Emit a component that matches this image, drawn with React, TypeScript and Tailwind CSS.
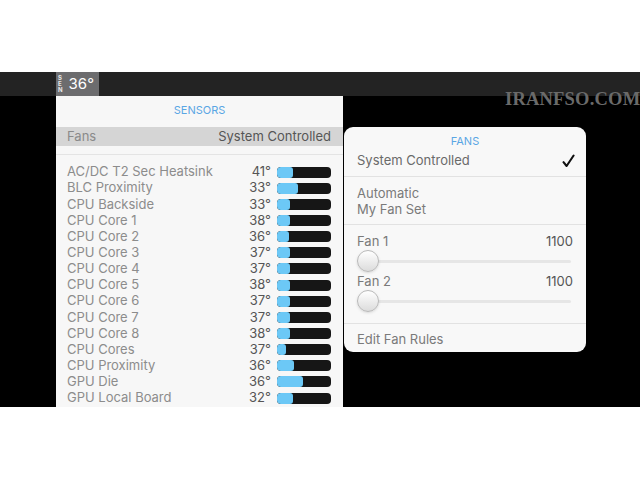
import React from 'react';

const sensors: { name: string; temp: number; fill: number }[] = [
  { name: 'AC/DC T2 Sec Heatsink', temp: 41, fill: 16 },
  { name: 'BLC Proximity', temp: 33, fill: 21 },
  { name: 'CPU Backside', temp: 33, fill: 13 },
  { name: 'CPU Core 1', temp: 38, fill: 13 },
  { name: 'CPU Core 2', temp: 36, fill: 12 },
  { name: 'CPU Core 3', temp: 37, fill: 13 },
  { name: 'CPU Core 4', temp: 37, fill: 13 },
  { name: 'CPU Core 5', temp: 38, fill: 13 },
  { name: 'CPU Core 6', temp: 37, fill: 13 },
  { name: 'CPU Core 7', temp: 37, fill: 13 },
  { name: 'CPU Core 8', temp: 38, fill: 13 },
  { name: 'CPU Cores', temp: 37, fill: 9 },
  { name: 'CPU Proximity', temp: 36, fill: 17 },
  { name: 'GPU Die', temp: 36, fill: 26 },
  { name: 'GPU Local Board', temp: 32, fill: 16 },
];

const Slider: React.FC = () => (
  <div className="relative h-[22px] flex items-center">
    <div className="absolute left-[20px] right-[2px] h-[3px] rounded-full bg-[#e6e6e6]" />
    <div className="relative w-[22px] h-[22px] rounded-full border border-[#b9b9b9] bg-gradient-to-b from-white to-[#dcdcdc] shadow-sm" />
  </div>
);

const FansPopup: React.FC = () => (
  <div className="absolute left-[344px] top-[31px] w-[242px] h-[225px] rounded-[9px] bg-[#f8f8f8] text-[13px] text-[#7a7a7a] overflow-hidden">
    <div className="pt-[7px] text-center text-[11px] leading-[14px] text-[#5aa6e4]">FANS</div>
    <div className="mt-[2px] flex items-center justify-between pl-[13px] pr-[11px] h-[22px] text-[#6a6a6a]">
      <span>System Controlled</span>
      <svg width="13" height="14" viewBox="0 0 13 14" fill="none">
        <path d="M1.5 8.2 L4.6 12 L11.6 1.5" stroke="#111" strokeWidth="2.1" strokeLinecap="round" strokeLinejoin="round" />
      </svg>
    </div>
    <div className="mt-[4px] border-t border-[#e2e2e2]" />
    <div className="px-[13px] pt-[8px] leading-[16px] h-[47px]">
      <div>Automatic</div>
      <div>My Fan Set</div>
    </div>
    <div className="border-t border-[#e2e2e2]" />
    <div className="px-[13px] pt-[8px]">
      <div className="flex justify-between leading-[16px]">
        <span>Fan 1</span>
        <span className="text-[#555]">1100</span>
      </div>
      <div className="mt-[1px]">
        <Slider />
      </div>
      <div className="flex justify-between leading-[16px] mt-[1px]">
        <span>Fan 2</span>
        <span className="text-[#555]">1100</span>
      </div>
      <div className="mt-[1px]">
        <Slider />
      </div>
    </div>
    <div className="mt-[11px] border-t border-[#e2e2e2]" />
    <div className="px-[13px] pt-[7px] leading-[16px]">Edit Fan Rules</div>
  </div>
);

const App: React.FC = () => {
  return (
    <div
      className="w-[640px] h-[480px] bg-white flex flex-col overflow-hidden"
      style={{ fontFamily: 'Inter, "Noto Sans", sans-serif' }}
    >
      <div className="h-[72px] bg-white" />
      <div className="relative h-[24px] bg-[#232323] flex">
        <div className="ml-[56px] w-[43px] h-full bg-[#6c6c6e] flex items-center">
          <div className="ml-[2px] flex flex-col text-[6px] leading-[6px] font-bold text-[#e8e8e8]">
            <span>S</span>
            <span>E</span>
            <span>N</span>
          </div>
          <span className="ml-[6px] text-[15px] text-white">36°</span>
        </div>
      </div>
      <div className="relative h-[311px] bg-black flex">
        <div className="ml-[56px] w-[287px] h-full bg-[#f7f7f7] overflow-hidden text-[13px]">
          <div className="h-[31px] flex items-center justify-center text-[11px] text-[#5aa6e4] pb-[2px]">
            SENSORS
          </div>
          <div className="h-[19px] bg-[#d5d5d5] flex items-center justify-between pl-[11px] pr-[12px]">
            <span className="text-[#8a8a8a]">Fans</span>
            <span className="text-[#555]">System Controlled</span>
          </div>
          <div className="mt-[8px] border-t border-[#e4e4e4]" />
          <div className="pt-[9px]">
            {sensors.map((s) => (
              <div key={s.name} className="flex items-center h-[16.15px] pl-[11px] pr-[12px]">
                <span className="flex-1 text-[#8c8c8c] whitespace-nowrap">{s.name}</span>
                <span className="text-[#555] w-[40px] text-right">{s.temp}°</span>
                <div className="ml-[6px] w-[54px] h-[11px] rounded-[4px] bg-[#161616] overflow-hidden flex">
                  <div className="h-full bg-[#6cc8f6] rounded-[3px]" style={{ width: s.fill }} />
                </div>
              </div>
            ))}
          </div>
        </div>
        <FansPopup />
      </div>
      <div className="flex-1 bg-white" />
      <div
        className="absolute left-[505px] top-[86px] text-[18.5px] font-bold text-[#6a6a6a] tracking-[0.2px]"
        style={{ fontFamily: '"Liberation Serif", serif' }}
      >
        IRANFSO.COM
      </div>
    </div>
  );
};

export default App;
